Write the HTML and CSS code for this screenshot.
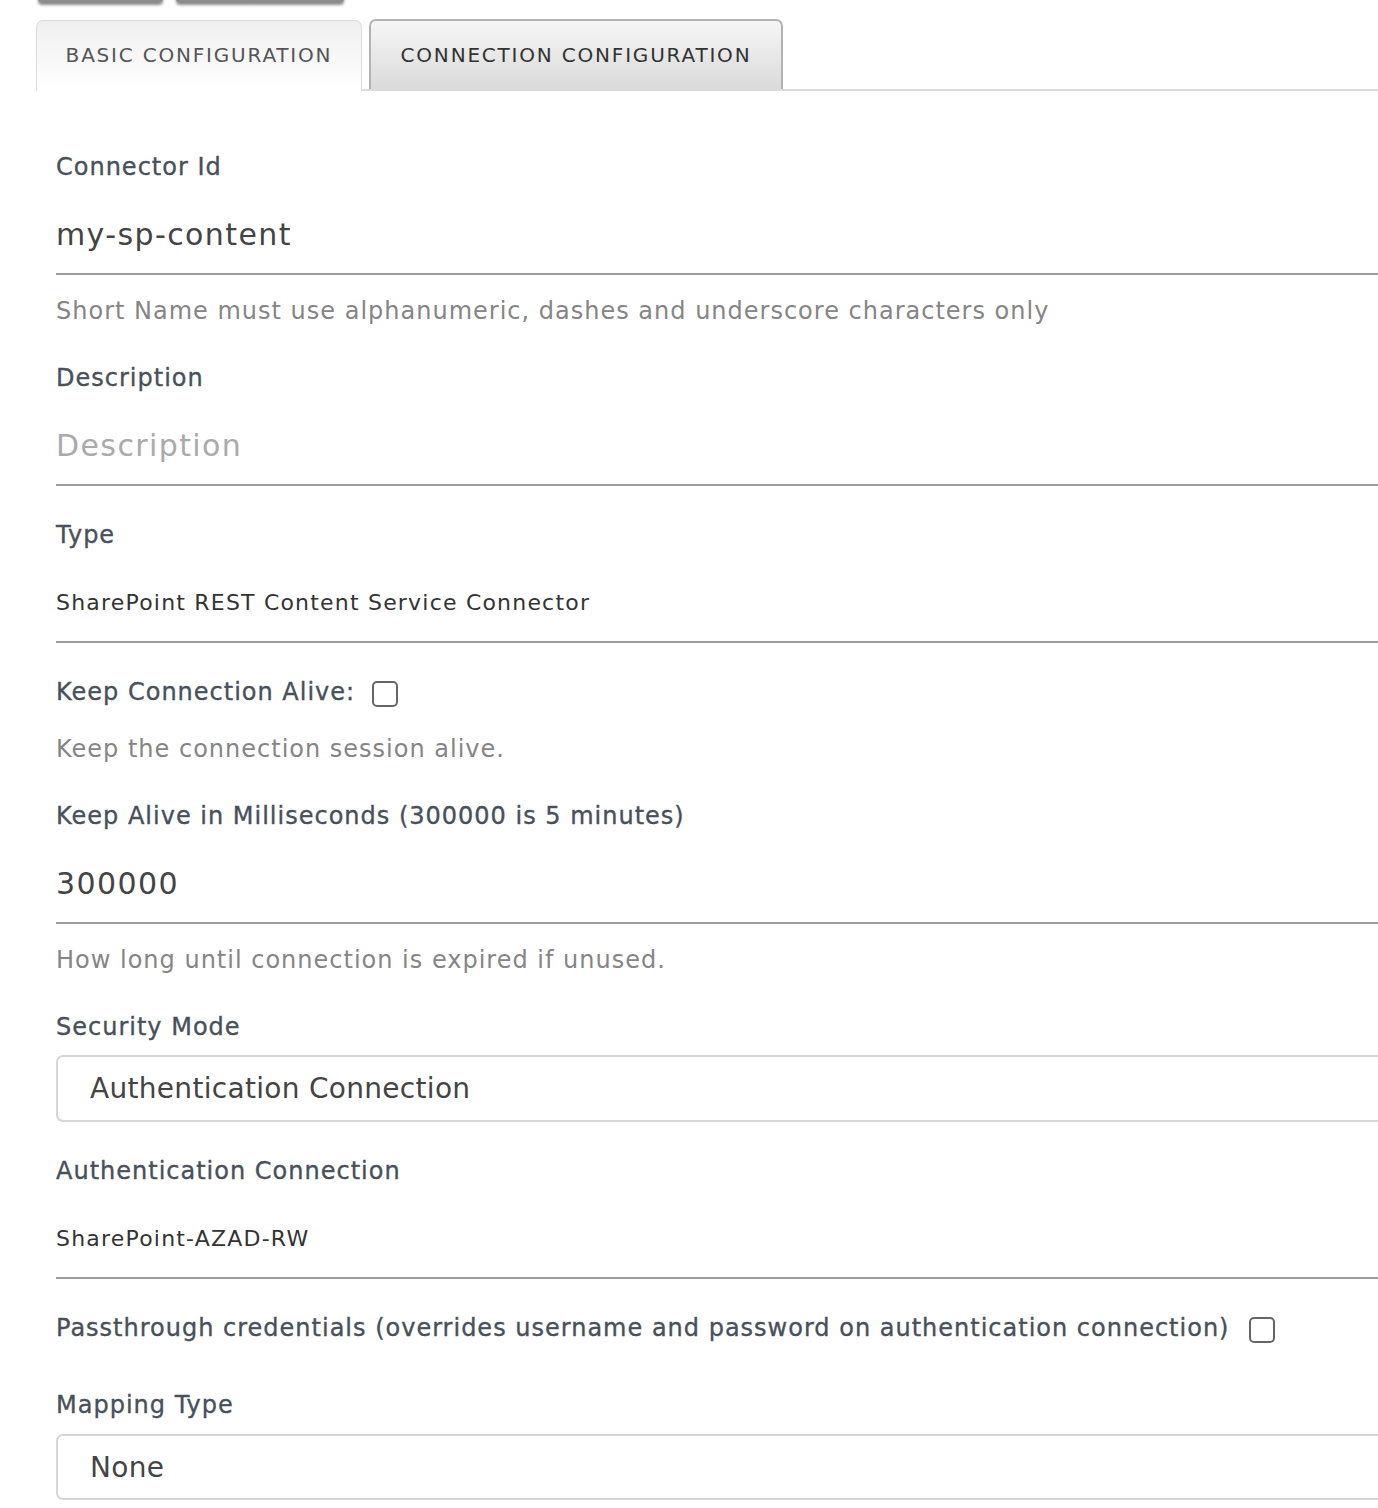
FILE: index.html
```html
<!DOCTYPE html>
<html>
<head>
<meta charset="utf-8">
<link rel="stylesheet" href="styles.css">
</head>
<body>
<div class="page">
  <div class="top-buttons">
    <span class="top-btn top-btn-a"></span>
    <span class="top-btn top-btn-b"></span>
  </div>
  <div class="tabs">
    <div class="tab tab-active">BASIC CONFIGURATION</div>
    <div class="tab tab-inactive">CONNECTION CONFIGURATION</div>
  </div>
  <div class="form">
    <div class="label">Connector Id</div>
    <div class="value value-input">my-sp-content</div>
    <div class="help">Short Name must use alphanumeric, dashes and underscore characters only</div>

    <div class="label label-after-help">Description</div>
    <div class="value value-input value-placeholder">Description</div>

    <div class="label label-after-line">Type</div>
    <div class="value value-static">SharePoint REST Content Service Connector</div>

    <div class="label label-after-line check-row">Keep Connection Alive: <span class="checkbox"></span></div>
    <div class="help help-after-check">Keep the connection session alive.</div>

    <div class="label label-after-help">Keep Alive in Milliseconds (300000 is 5 minutes)</div>
    <div class="value value-input">300000</div>
    <div class="help">How long until connection is expired if unused.</div>

    <div class="label label-after-help">Security Mode</div>
    <div class="select">Authentication Connection</div>

    <div class="label label-after-select">Authentication Connection</div>
    <div class="value value-static">SharePoint-AZAD-RW</div>

    <div class="label label-after-line check-row">Passthrough credentials (overrides username and password on authentication connection) <span class="checkbox checkbox-wide"></span></div>

    <div class="label label-after-check">Mapping Type</div>
    <div class="select select-last">None</div>
  </div>
</div>
</body>
</html>
```

FILE: styles.css
```css
html, body {
  margin: 0;
  padding: 0;
  background: #fff;
  overflow: hidden;
}
body {
  font-family: "DejaVu Sans", "Open Sans", sans-serif;
  width: 1378px;
  height: 1508px;
}
.page {
  width: 1440px;
}
.top-buttons {
  display: flex;
  height: 0;
  padding-left: 38px;
  gap: 13px;
}
.top-btn {
  display: block;
  height: 40px;
  margin-top: -37px;
  background: linear-gradient(#bbb, #8a8a8a);
  border-radius: 0 0 4px 4px;
  box-shadow: 0 2px 3px rgba(0,0,0,0.45);
}
.top-btn-a { width: 125px; }
.top-btn-b { width: 168px; }

.tabs {
  display: flex;
  align-items: flex-end;
  margin-top: 20px;
  margin-left: 36px;
  border-bottom: 2px solid #dcdcdc;
  box-sizing: border-box;
  height: 71px;
}
.tab {
  box-sizing: border-box;
  display: flex;
  align-items: center;
  justify-content: center;
  font-size: 20px;
  letter-spacing: 1.8px;
  border-radius: 7px 7px 0 0;
}
.tab-active {
  width: 326px;
  height: 71px;
  margin-bottom: -2px;
  border: 1px solid #dcdcdc;
  border-bottom: none;
  background: linear-gradient(#efefef, #ffffff);
  color: #555;
  padding-bottom: 2px;
}
.tab-inactive {
  width: 414px;
  margin-left: 7px;
  height: 70px;
  border: 2px solid #b3b3b3;
  border-bottom: none;
  background: linear-gradient(#f6f6f6, #dadada);
  color: #333;
}

.form {
  padding-left: 56px;
  padding-top: 59px;
}
.label {
  font-size: 24px;
  line-height: 34px;
  color: #47505b;
  letter-spacing: 1px;
  -webkit-text-stroke: 0.35px #47505b;
}
.label-after-help { margin-top: 33px; }
.label-after-line { margin-top: 32px; }
.label-after-select { margin-top: 32px; }
.label-after-check { margin-top: 43px; }

.check-row {
  display: flex;
  align-items: center;
}
.checkbox {
  display: inline-block;
  width: 22px;
  height: 22px;
  border: 2px solid #666;
  border-radius: 5px;
  margin-left: 17px;
  margin-top: 3px;
  -webkit-text-stroke: 0;
}
.checkbox-wide { margin-left: 20px; }

.value {
  padding-top: 31px;
  padding-bottom: 18px;
  line-height: 40px;
  border-bottom: 2px solid #9e9e9e;
  color: #444;
}
.value-input {
  font-size: 30px;
  letter-spacing: 1.4px;
}
.value-placeholder {
  color: #aaa;
}
.value-static {
  font-size: 22px;
  color: #333;
  letter-spacing: 1.2px;
}

.help {
  margin-top: 19px;
  font-size: 24px;
  line-height: 34px;
  color: #858585;
  letter-spacing: 1px;
}
.help-after-check { margin-top: 23px; }

.select {
  margin-top: 11px;
  height: 67px;
  box-sizing: border-box;
  border: 2px solid #d6d6d6;
  border-radius: 7px;
  padding-left: 32px;
  display: flex;
  align-items: center;
  font-size: 28px;
  color: #444;
  letter-spacing: 0.3px;
}
.select-last { margin-top: 12px; height: 66px; }
```
